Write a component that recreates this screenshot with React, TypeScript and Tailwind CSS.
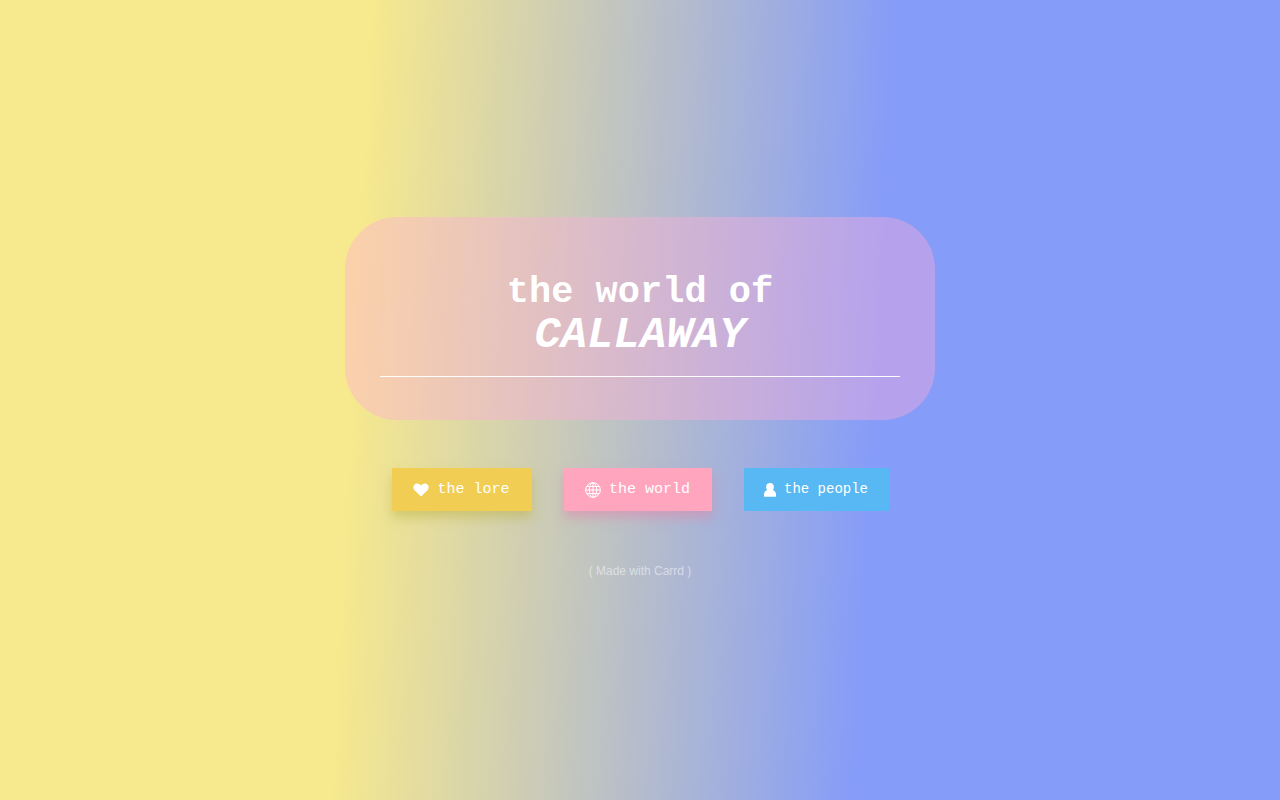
import type { ReactNode } from "react";

type NavLink = {
  href: string;
  label: string;
  className: string;
  icon: ReactNode;
};

function HeartIcon() {
  return (
    <svg viewBox="0 0 16 14" className="h-[14px] w-4" fill="currentColor" aria-hidden="true">
      <path d="M8 13.5 1.7 7.4C-.1 5.600 0 2.900 1.500 1.500 3.300-.1 6.200.1 8 2.600 9.800.1 12.700-.1 14.500 1.500c1.500 1.400 1.600 4.100-.2 5.900z" />
    </svg>
  );
}

function GlobeIcon() {
  return (
    <svg viewBox="0 0 16 16" className="size-4" fill="none" stroke="currentColor" aria-hidden="true">
      <circle cx="8" cy="8" r="7.300" />
      <ellipse cx="8" cy="8" rx="3.700" ry="7.300" />
      <path d="M8 .7v14.600M.7 8h14.600M2 4.500h12M2 11.500h12" />
    </svg>
  );
}

function PersonIcon() {
  return (
    <svg viewBox="0 0 12 14" className="h-[14px] w-3" fill="currentColor" aria-hidden="true">
      <path d="M6 0c2.400 0 3.900 1.700 3.900 3.900 0 1.200-.4 2.200-1.100 3C10.900 7.600 12 9.200 12 11.300v1.600c0 .6-.4.9-1 .9H1c-.6 0-1-.3-1-.9v-1.600C0 9.200 1.100 7.600 3.200 6.900 2.500 6.100 2.100 5.100 2.100 3.900 2.100 1.700 3.600 0 6 0z" />
    </svg>
  );
}

const links: NavLink[] = [
  {
    href: "#lore",
    label: "the lore",
    className: "w-[140px] bg-[#f1ce53] text-[15px] shadow-[0_7px_10px_rgba(190,180,70,0.5)]",
    icon: <HeartIcon />,
  },
  {
    href: "#world",
    label: "the world",
    className: "w-[148px] bg-[#ffa5be] text-[15px] shadow-[0_7px_10px_rgba(220,140,175,0.6)]",
    icon: <GlobeIcon />,
  },
  {
    href: "#people",
    label: "the people",
    className: "w-[145px] bg-[#57b8f3] text-sm",
    icon: <PersonIcon />,
  },
];

export default function App() {
  return (
    <div className="flex min-h-screen flex-col items-center justify-center bg-[linear-gradient(93deg,#f7e98d_28%,#859cf9_68%)] px-4 text-white">
      <main className="flex w-full max-w-[590px] flex-col items-center">
        {/* title card */}
        <header className="w-full rounded-[52px] bg-[rgba(255,173,217,0.4)] px-[35px] pt-[54px] pb-[43px]">
          <h1 className="pb-[19px] text-center font-['Liberation_Mono',monospace] font-bold">
            <span className="block text-[37px] leading-[42px]">the world of</span>
            <span className="block text-[44px] leading-[44px] italic">CALLAWAY</span>
          </h1>
          <hr className="border-t border-white" />
        </header>

        {/* section links */}
        <nav className="mt-12 flex flex-wrap justify-center gap-8 font-['Liberation_Mono',monospace]">
          {links.map((link) => (
            <a
              key={link.href}
              href={link.href}
              className={`flex h-[43px] items-center justify-center gap-2 whitespace-nowrap ${link.className}`}
            >
              {link.icon}
              <span className="leading-[25px]">{link.label}</span>
            </a>
          ))}
        </nav>
      </main>

      <footer className="mt-12 font-['Liberation_Sans',sans-serif] text-xs leading-6 text-white/50">
        <a href="#carrd">( Made with Carrd )</a>
      </footer>
    </div>
  );
}
